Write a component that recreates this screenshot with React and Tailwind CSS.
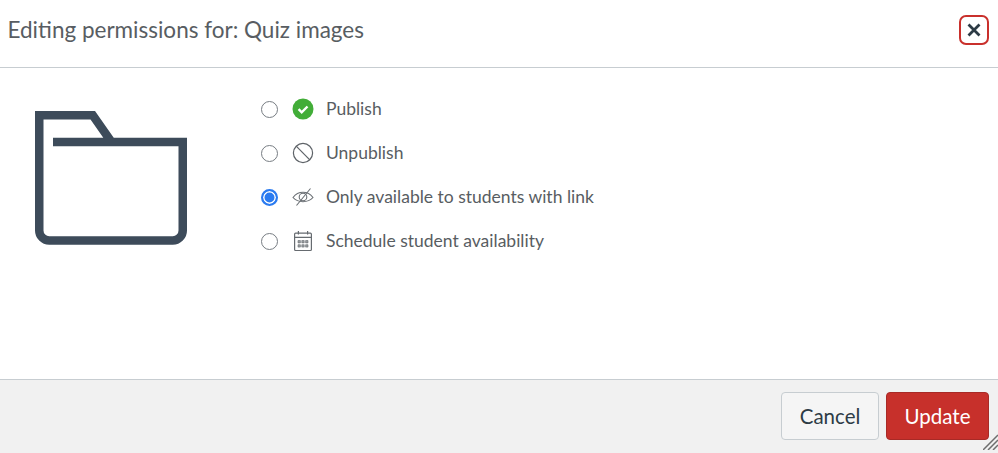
import React, { useState } from 'react';

function CheckIcon() {
  return (
    <svg width="22" height="22" viewBox="0 0 22 22">
      <circle cx="11" cy="11" r="10.5" fill="#42ad38" />
      <path d="M6.600 11.200l3.100 3.100 5.800-5.800" fill="none" stroke="#fff" strokeWidth="2.400" />
    </svg>
  );
}

function BlockedIcon() {
  return (
    <svg width="22" height="22" viewBox="0 0 22 22" fill="none" stroke="#5e6368" strokeWidth="1.200">
      <circle cx="11" cy="11" r="9.600" />
      <path d="M4.200 4.200l13.600 13.600" />
    </svg>
  );
}

function EyeOffIcon() {
  return (
    <svg width="22" height="22" viewBox="0 0 22 22" fill="none" stroke="#6a6f74" strokeWidth="1.100">
      <path d="M1 11.500c2.600-3.400 5.900-5.200 10-5.200s7.400 1.800 10 5.200c-2.600 2.800-5.900 4.200-10 4.200S3.600 14.300 1 11.500z" />
      <circle cx="11" cy="11" r="3.800" />
      <path d="M4.500 19.500L18.500 2.500" />
    </svg>
  );
}

function CalendarIcon() {
  return (
    <svg width="22" height="22" viewBox="0 0 22 22" fill="none" stroke="#666b70" strokeWidth="1.200">
      <rect x="2.600" y="3.200" width="16.800" height="17.300" rx="1" />
      <path d="M2.600 7.400h16.800M6.400 1v3.400M15.600 1v3.400" />
      <path
        d="M6 10.500h2.400v2.400H6zM9.800 10.500h2.400v2.400H9.800zM13.600 10.500H16v2.400h-2.400zM6 14.700h2.400v2.400H6zM9.800 14.700h2.400v2.400H9.800zM13.600 14.700H16v2.400h-2.400z"
        fill="#9a9da0"
        strokeWidth="0.600"
      />
    </svg>
  );
}

const options = [
  { id: 'publish', label: 'Publish', icon: <CheckIcon /> },
  { id: 'unpublish', label: 'Unpublish', icon: <BlockedIcon /> },
  { id: 'link', label: 'Only available to students with link', icon: <EyeOffIcon /> },
  { id: 'schedule', label: 'Schedule student availability', icon: <CalendarIcon /> },
];

function App() {
  const [selected, setSelected] = useState('link');

  return (
    <div className="relative flex h-[453px] w-[998px] flex-col overflow-hidden bg-white font-['Lato',sans-serif] text-[#585d62]">
      <div className="flex h-[68px] items-center justify-between border-b border-[#c7cdd1] pl-[7.500px] pr-[9px] pb-[6px]">
        <h2 className="text-[22.500px] leading-none font-normal">Editing permissions for: Quiz images</h2>
        <button className="mb-[2px] flex h-[30px] w-[30px] items-center justify-center rounded-[7px] border-[2.500px] border-[#c9302c]">
          <svg width="16" height="16" viewBox="0 0 16 16">
            <path d="M2.500 2.500l11 11M13.500 2.500l-11 11" stroke="#2d3b45" strokeWidth="2.800" />
          </svg>
        </button>
      </div>

      <div className="flex flex-1 items-start pt-[19px] pl-[35px]">
        <svg className="mt-[24px] shrink-0" width="152" height="134" viewBox="0 0 152 134" fill="none">
          <path
            d="M18 31H147.750V119.500a10 10 0 0 1-10 10H14.250a10 10 0 0 1-10-10V4.250H57.800L76.500 31"
            stroke="#3d4b5a"
            strokeWidth="8.500"
          />
        </svg>

        <div className="ml-[73px] flex flex-col">
          {options.map((option) => (
            <label key={option.id} className="flex h-[44px] items-center">
              <input
                type="radio"
                name="permission"
                checked={selected === option.id}
                onChange={() => setSelected(option.id)}
                className="ml-px h-[17px] w-[17px] shrink-0 appearance-none rounded-full border-[1.500px] border-[#777d83] bg-white checked:border-2 checked:border-[#2b7bf0] checked:bg-[#2b7bf0] checked:shadow-[inset_0_0_0_1.500px_#fff]"
              />
              <span className="ml-[14px] flex w-[22px] shrink-0 justify-center">{option.icon}</span>
              <span className="ml-[12px] text-[17.500px] leading-none">{option.label}</span>
            </label>
          ))}
        </div>
      </div>

      <div className="flex h-[74px] items-start justify-end gap-[7px] border-t border-[#c7cdd1] bg-[#f1f1f1] pt-[12px] pr-[9px]">
        <button className="h-[48px] w-[98px] rounded-[4px] border border-[#c7cdd1] bg-[#f5f5f5] text-[20.500px] text-[#2d3b45]">
          Cancel
        </button>
        <button className="h-[48px] w-[103px] rounded-[4px] border border-[#a82a26] bg-[#c7302b] text-[20.500px] text-white">
          Update
        </button>
      </div>

      <svg className="absolute right-0 bottom-[3px]" width="15" height="16" viewBox="0 0 15 16" stroke="#6e6e6e" strokeWidth="1.500">
        <path d="M0 16L15 1M5 16L15 6M10 16l5-5" />
      </svg>
    </div>
  );
}

export default App;
